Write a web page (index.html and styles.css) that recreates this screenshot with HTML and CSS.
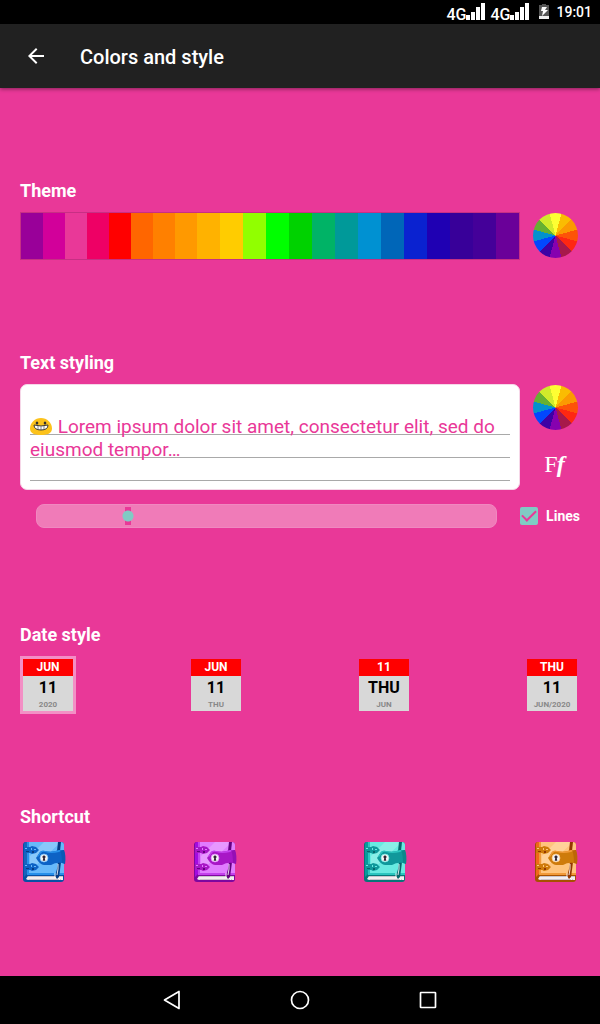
FILE: index.html
```
<!DOCTYPE html>
<html lang="en">
<head>
<meta charset="utf-8">
<meta name="viewport" content="width=device-width, initial-scale=1">
<title>Colors and style</title>
<link rel="stylesheet" href="styles.css">
</head>
<body>
<svg class="defs" aria-hidden="true">
  <defs>
    <symbol id="signal" viewBox="0 0 20 18">
      <path fill="#fff" d="M0 12h4v5H0zM5 9h4v8H5zM10 4h4v13h-4zM15 0h4v17h-4z"/>
    </symbol>
    <symbol id="diary" viewBox="0 0 48 48">
      <rect x="3" y="4" width="41" height="40" rx="3" fill="var(--dark)"/>
      <path d="M9 4h32q3 0 3 3v29H9z" fill="var(--light)"/>
      <path d="M10 18 24 4h17L10 33z" fill="#fff" opacity=".22"/>
      <path d="M4 6q0-2 2-2h1v32l-3 3z" fill="var(--spine)"/>
      <path d="M7 4h2v33H7z" fill="var(--mid)"/>
      <path d="M9 35h35v2H9z" fill="var(--mid)"/>
      <path d="M8 38h35v4H8l-2-1z" fill="#f4eef0"/>
      <path d="M8 38h35v1H8zM9 41h32v1H8z" fill="#c9c4cc"/>
      <g id="clasp">
        <path d="M4 9h6l2-1 4 1 3 3-3 3-4 1-2-1H4z" fill="var(--strap)"/>
        <path d="M5 10h2v1H5zM11 10h1v2h-1zM14 11h2v1h-2z" fill="var(--light)"/>
        <path d="M6 13h3v1H6zM12 13h2v2h-2z" fill="var(--deep)"/>
      </g>
      <use href="#clasp" y="17"/>
      <path d="M38 4h3l-1 9h-3z" fill="var(--deep)"/>
      <path d="M38 24h3l-1 8-1 7-2 2-2-3 2-7z" fill="var(--deep)"/>
      <path d="M38 26v5l-1 6M35 35v5M38 40l2 2" stroke="#fff" stroke-width="1" fill="none" opacity=".85"/>
      <path d="M20 14q2-2 5-1 7 2 14-1h5q2 5 1 14l-3-1q-6-1-11 2h-7q-4 0-8-7z" fill="var(--strap)"/>
      <path d="M20 14q2-2 5-1 7 2 14-1h4l-4 2q-8 2-14 0-2-1-4 1l-3 4-1 0z" fill="var(--mid)"/>
      <path d="M40 12h4q2 5 1 14l-3-1q0-8-2-13z" fill="var(--dark)" opacity=".45"/>
      <circle cx="24" cy="20" r="4" fill="#f4f4f4" stroke="var(--light)" stroke-width=".7"/>
      <path d="M24 17.500a1.500 1.500 0 0 1 .8 2.800l.5 2.500h-2.600l.5-2.500a1.500 1.500 0 0 1 .8-2.800z" fill="#342737"/>
    </symbol>
  </defs>
</svg>

<header class="status-bar">
  <span class="network"><span class="network-type">4G</span><svg class="signal" aria-hidden="true"><use href="#signal"/></svg></span>
  <span class="network"><span class="network-type">4G</span><svg class="signal" aria-hidden="true"><use href="#signal"/></svg></span>
  <svg class="battery" viewBox="0 0 10 15" aria-hidden="true">
    <path d="M3 0h4v1h3v14H0V1h3z" fill="#555"/><path d="M0 12h10v3H0z" fill="#eee"/>
    <path d="M3 3h5L6 6h3l-6 6 1-5H2z" fill="#fff"/>
  </svg>
  <time class="clock">19:01</time>
</header>

<div class="app-bar">
  <button class="back" aria-label="Back">
    <svg width="24" height="24" viewBox="0 0 24 24" aria-hidden="true"><path d="M20 11H7.800l5.600-5.600L12 4l-8 8 8 8 1.400-1.400L7.800 13H20z" fill="#fff"/></svg>
  </button>
  <h1 class="title">Colors and style</h1>
</div>

<main class="settings">
  <section class="section">
    <h2 class="heading">Theme</h2>
    <div class="theme-row">
      <div class="palette" role="group" aria-label="Theme color">
        <button class="swatch narrow" style="background:#990099" aria-label="Purple"></button>
        <button class="swatch narrow" style="background:#d2009a" aria-label="Magenta"></button>
        <button class="swatch narrow" style="background:#e93898" aria-label="Pink"></button>
        <button class="swatch narrow" style="background:#ee0065" aria-label="Crimson"></button>
        <button class="swatch narrow" style="background:#ff0000" aria-label="Red"></button>
        <button class="swatch narrow" style="background:#ff6600" aria-label="Vermilion"></button>
        <button class="swatch narrow" style="background:#ff8000" aria-label="Orange"></button>
        <button class="swatch narrow" style="background:#ff9900" aria-label="Light orange"></button>
        <button class="swatch" style="background:#ffb200" aria-label="Amber"></button>
        <button class="swatch" style="background:#ffcc00" aria-label="Yellow"></button>
        <button class="swatch" style="background:#91ff00" aria-label="Lime"></button>
        <button class="swatch" style="background:#00ff00" aria-label="Bright green"></button>
        <button class="swatch" style="background:#00d200" aria-label="Green"></button>
        <button class="swatch" style="background:#00b366" aria-label="Sea green"></button>
        <button class="swatch" style="background:#009999" aria-label="Teal"></button>
        <button class="swatch" style="background:#0091d2" aria-label="Sky blue"></button>
        <button class="swatch" style="background:#0066b8" aria-label="Azure"></button>
        <button class="swatch" style="background:#0a22d0" aria-label="Blue"></button>
        <button class="swatch" style="background:#1f00b3" aria-label="Deep blue"></button>
        <button class="swatch" style="background:#380099" aria-label="Indigo"></button>
        <button class="swatch" style="background:#440099" aria-label="Dark violet"></button>
        <button class="swatch" style="background:#6a0099" aria-label="Violet"></button>
      </div>
      <button class="wheel" aria-label="Pick a theme color"></button>
    </div>
  </section>

  <section class="section">
    <h2 class="heading">Text styling</h2>
    <div class="text-row">
      <div class="preview">
        <p class="preview-text"><svg class="emoji" viewBox="0 0 22 17" role="img" aria-label="Grinning face"><path d="M11 0C17 0 22 5 22 10.500 22 15 18 17 11 17S0 15 0 10.500C0 5 5 0 11 0z" fill="#fcc21b"/><ellipse cx="7" cy="5" rx="1.300" ry="1.600" fill="#2f2f2f"/><ellipse cx="15" cy="5" rx="1.300" ry="1.600" fill="#2f2f2f"/><path d="M4 7q7 2 14 0 0 5-7 5T4 7z" fill="#fff" stroke="#3c3a38" stroke-width="1"/><path d="M8 8v4M11 8.500V12M14 8v4" fill="none" stroke="#555" stroke-width=".7"/></svg> Lorem ipsum dolor sit amet, consectetur elit, sed do eiusmod tempor…</p>
      </div>
      <div class="text-tools">
        <button class="wheel" aria-label="Pick a text color"></button>
        <button class="font-button" aria-label="Choose font">F<i>f</i></button>
      </div>
    </div>
    <div class="size-row">
      <input class="size-slider" type="range" min="0" max="100" value="19" aria-label="Text size">
      <label class="lines"><input class="check" type="checkbox" checked>Lines</label>
    </div>
  </section>

  <section class="section">
    <h2 class="heading">Date style</h2>
    <div class="choices" role="radiogroup" aria-label="Date style">
      <label class="date"><input class="date-input" type="radio" name="date" checked><span class="date-top">JUN</span><span class="date-main">11</span><span class="date-sub">2020</span></label>
      <label class="date"><input class="date-input" type="radio" name="date"><span class="date-top">JUN</span><span class="date-main">11</span><span class="date-sub">THU</span></label>
      <label class="date"><input class="date-input" type="radio" name="date"><span class="date-top">11</span><span class="date-main">THU</span><span class="date-sub">JUN</span></label>
      <label class="date"><input class="date-input" type="radio" name="date"><span class="date-top">THU</span><span class="date-main">11</span><span class="date-sub">JUN/2020</span></label>
    </div>
  </section>

  <section class="section">
    <h2 class="heading">Shortcut</h2>
    <div class="choices">
      <button class="shortcut blue" aria-label="Blue diary"><svg width="48" height="48"><use href="#diary"/></svg></button>
      <button class="shortcut violet" aria-label="Violet diary"><svg width="48" height="48"><use href="#diary"/></svg></button>
      <button class="shortcut teal" aria-label="Teal diary"><svg width="48" height="48"><use href="#diary"/></svg></button>
      <button class="shortcut orange" aria-label="Orange diary"><svg width="48" height="48"><use href="#diary"/></svg></button>
    </div>
  </section>
</main>

<nav class="nav-bar">
  <button class="nav-button" aria-label="Back"><svg width="24" height="24" viewBox="0 0 24 24"><path d="M19 3.500v17L4.500 12z" fill="none" stroke="#fff" stroke-width="1.700" stroke-linejoin="round"/></svg></button>
  <button class="nav-button" aria-label="Home"><svg width="24" height="24" viewBox="0 0 24 24"><circle cx="12" cy="12" r="8.500" fill="none" stroke="#fff" stroke-width="1.700"/></svg></button>
  <button class="nav-button" aria-label="Recent apps"><svg width="24" height="24" viewBox="0 0 24 24"><rect x="4.500" y="4.500" width="15" height="15" rx=".5" fill="none" stroke="#fff" stroke-width="1.700"/></svg></button>
</nav>
</body>
</html>
```
FILE: styles.css
```
:root {
  --pink: #e93898;
  --aqua: #80cbc4;
}
* { box-sizing: border-box; }
body {
  margin: 0;
  min-height: 100vh;
  display: flex;
  flex-direction: column;
  background: var(--pink);
  color: #fff;
  font-family: Roboto, "Noto Sans", sans-serif;
}
button {
  border: 0;
  padding: 0;
  background: none;
  color: inherit;
  cursor: pointer;
}
svg { display: block; }
.defs { position: absolute; width: 0; height: 0; }

.status-bar {
  height: 24px;
  display: flex;
  align-items: center;
  justify-content: flex-end;
  padding-right: 8px;
  background: #000;
}
.network {
  height: 18px;
  display: flex;
  align-items: flex-end;
  margin-right: 4px;
}
.network-type {
  font-size: 16px;
  line-height: 12px;
  font-weight: 500;
}
.signal { width: 20px; height: 18px; }
.battery { width: 10px; height: 15px; margin: 0 7px 2px 5px; }
.clock { font-size: 14px; font-weight: 500; }

.app-bar {
  height: 64px;
  display: flex;
  align-items: center;
  gap: 20px;
  padding: 0 12px;
  background: #212121;
  box-shadow: 0 1px 4px rgba(0, 0, 0, .45);
}
.back {
  width: 48px;
  height: 48px;
  display: grid;
  place-items: center;
}
.title { margin: 2px 0 0; font-size: 20px; font-weight: 500; }

.settings {
  flex: 1;
  display: flex;
  flex-direction: column;
  justify-content: space-evenly;
  padding: 0 20px;
}
.heading {
  margin: 0 0 10px;
  font-size: 18px;
  line-height: 22px;
  font-weight: 700;
}

.theme-row, .text-row {
  display: flex;
  gap: 13px;
}
.palette {
  flex: 1;
  height: 48px;
  display: flex;
  border: 1px solid #c72f84;
}
.swatch { flex: 23; }
.swatch.narrow { flex: 22; }
.wheel {
  width: 45px;
  height: 45px;
  margin: 1px 2px 2px 0;
  border-radius: 50%;
  background: conic-gradient(from -15deg,
    #fefe33 30deg, #fabc02 30deg 60deg, #fb9902 60deg 90deg,
    #fd5308 90deg 120deg, #fe2712 120deg 150deg, #a7194b 150deg 180deg,
    #8601af 180deg 210deg, #3d01a4 210deg 240deg, #0247fe 240deg 270deg,
    #0391ce 270deg 300deg, #66b032 300deg 330deg, #d0ea2b 330deg);
}

.preview {
  flex: 1;
  padding: 30px 9px 8px;
  border: 1px solid #f6d7e8;
  border-radius: 7px;
  background: #fff;
}
.preview-text {
  min-height: 66px;
  margin: 0;
  color: var(--pink);
  font-size: 19px;
  line-height: 23px;
  background: repeating-linear-gradient(transparent 0 19px, #a9a9a9 19px 20px, transparent 20px 23px);
}
.emoji {
  display: inline-block;
  width: 22px;
  height: 17px;
  margin-right: 1px;
  vertical-align: -2px;
}
.text-tools {
  display: flex;
  flex-direction: column;
  gap: 8px;
}
.font-button {
  height: 48px;
  padding-right: 4px;
  font-family: "Liberation Serif", serif;
  font-size: 24px;
}
.font-button i { margin-left: -1px; font-weight: 700; }

.size-row {
  display: flex;
  align-items: center;
  gap: 23px;
  padding: 14px 0 4px 16px;
}
.size-slider {
  appearance: none;
  flex: 1;
  min-width: 0;
  height: 24px;
  margin: 0;
  border: 1px solid #f088c0;
  border-radius: 8px;
  background: #f07bb8;
}
.size-slider::-webkit-slider-thumb {
  appearance: none;
  width: 12px;
  height: 18px;
  background:
    radial-gradient(circle, var(--aqua) 5px, transparent 6px),
    linear-gradient(var(--pink), var(--pink)) center / 6px 18px no-repeat;
}
.lines {
  display: flex;
  align-items: center;
  gap: 8px;
  font-size: 14px;
  font-weight: 700;
}
.check {
  appearance: none;
  width: 18px;
  height: 18px;
  margin: 0;
  display: grid;
  place-items: center;
  border-radius: 2px;
  background: var(--aqua);
}
.check:checked::after {
  content: "";
  width: 12px;
  height: 6px;
  margin-bottom: 4px;
  border: solid var(--pink);
  border-width: 0 0 2px 2px;
  transform: rotate(-45deg);
}

.choices {
  display: flex;
  justify-content: space-between;
}
.date {
  width: 56px;
  display: flex;
  flex-direction: column;
  border: 3px solid transparent;
  text-align: center;
  font-weight: 700;
  background: #d8d8d8 padding-box;
}
.date:has(:checked) { border-color: #f38fc5; }
.date-input {
  position: absolute;
  appearance: none;
  margin: 0;
}
.date-top { background: #f00; font-size: 12px; line-height: 17px; }
.date-main { color: #000; font-size: 16px; line-height: 23px; }
.date-sub { color: #888; font-size: 8px; line-height: 12px; }

.shortcut { width: 48px; height: 46px; }
.blue { --light: #67b9fa; --mid: #2790ea; --strap: #0d62c5; --spine: #1764bd; --dark: #0750a5; --deep: #073c83; }
.violet { --light: #e17cff; --mid: #c441ed; --strap: #a817c6; --spine: #a30ce0; --dark: #7e079f; --deep: #650081; }
.teal { --light: #68eae1; --mid: #2bc5bf; --strap: #10989b; --spine: #079b9c; --dark: #067579; --deep: #07666c; }
.orange { --light: #ffc47d; --mid: #f19a39; --strap: #ce7b0b; --spine: #ef671b; --dark: #a75000; --deep: #943800; }

.nav-bar {
  height: 48px;
  display: flex;
  align-items: center;
  justify-content: center;
  gap: 80px;
  background: #000;
}
.nav-button {
  width: 48px;
  height: 48px;
  display: grid;
  place-items: center;
}
```
